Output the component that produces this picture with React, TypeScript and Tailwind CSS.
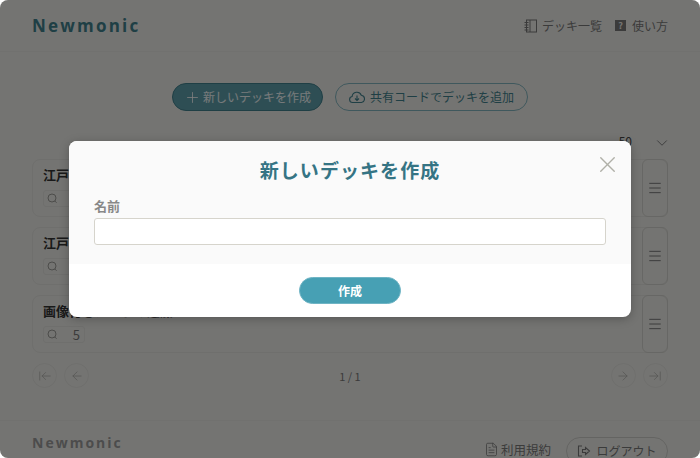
import { ArrowLeft, ArrowLeftToLine, ArrowRight, ArrowRightToLine, ChevronDown, FileText, Menu, Plus, X } from 'lucide-react';

const font = { jp: "font-['Noto_Sans_CJK_JP','Noto_Sans',sans-serif]" };

interface DeckRowProps {
  title: string;
  count: string;
}

const QuestionIcon = () => (
  <svg width="11" height="11" viewBox="0 0 11 11" fill="none" stroke="#999995" strokeWidth="1" className="shrink-0">
    <circle cx="5" cy="5" r="4" />
    <path d="M7.600 7.800l2 2" />
  </svg>
);

const NotebookIcon = () => (
  <svg width="13" height="14" viewBox="0 0 13 14" fill="none" stroke="currentColor" strokeWidth="1">
    <rect x="2.5" y="1" width="10" height="12" />
    <path d="M6 1v12M0.5 3.5h4M0.5 6h4M0.5 8.500h4M0.5 11h4" />
  </svg>
);

const CloudIcon = () => (
  <svg width="16" height="14" viewBox="0 0 16 14" fill="none" stroke="currentColor" strokeWidth="1.1">
    <path d="M4 12.500H3.500a3 3 0 0 1-.4-5.950A4.800 4.800 0 0 1 12.300 5.200a3.700 3.700 0 0 1 .2 7.300H4z" />
    <path d="M8 5.500v5M6 8.500l2 2 2-2" />
  </svg>
);

const LogoutIcon = () => (
  <svg width="14" height="14" viewBox="0 0 14 14" fill="none" stroke="currentColor" strokeWidth="1.1">
    <path d="M5 2H1.500v10H5" />
    <path d="M5.500 5.500h3V3.500l4 3.500-4 3.500v-2h-3z" />
  </svg>
);

const DeckRow = ({ title, count }: DeckRowProps) => (
  <div className="flex h-[58px] rounded-[8px] border border-[#dededa]">
    <div className="flex-1 pl-[10px] pt-[5px]">
      <div className="text-[13px] leading-[20px] font-bold text-[#333]">{title}</div>
      <div className="mt-[5px] flex h-[17px] w-[42px] items-center justify-between rounded-[3px] border border-[#dededa] pl-[3px] pr-[4px]">
        <QuestionIcon />
        <span className="text-[13px] leading-none text-[#777]">{count}</span>
      </div>
    </div>
    <div className="-my-px -mr-px flex w-[26px] items-center justify-center rounded-[6px] border border-[#cfcfca]">
      <Menu size={16} className="text-[#777]" strokeWidth={1.5} />
    </div>
  </div>
);

const PageButton = ({ children }: { children: React.ReactNode }) => (
  <div className="flex h-[25px] w-[25px] items-center justify-center rounded-full border border-[#dededa] text-[#aaaaa6]">
    {children}
  </div>
);

export default function App() {
  return (
    <div className={`relative h-[458px] w-[700px] overflow-hidden bg-white ${font.jp}`}>
      <div className="flex h-full flex-col rounded-[8px] bg-[#e9e9e5]">
        <header className="flex h-[52px] shrink-0 items-center justify-between border-b border-[#e2e2de] px-[32px]">
          <div className="font-['Open_Sans',sans-serif] text-[17px] font-bold tracking-[2.2px] text-[#3f7e8a]">Newmonic</div>
          <div className="flex items-center gap-[13px] text-[12px] text-[#777]">
            <span className="flex items-center gap-[5px]"><NotebookIcon />デッキ一覧</span>
            <span className="flex items-center gap-[6px]">
              <span className="flex h-[11px] w-[11px] items-center justify-center bg-[#777] text-[9px] leading-none font-bold text-[#e9e9e5]">?</span>
              使い方
            </span>
          </div>
        </header>

        <main className="flex-1 px-[32px]">
          <div className="mt-[31px] flex justify-center gap-[12px] text-[12px]">
            <div className="flex h-[28px] w-[151px] items-center justify-center gap-[2px] rounded-full border border-[#3f7e8a] bg-[#5d9ca8] text-white/90">
              <Plus size={17} strokeWidth={1.25} />新しいデッキを作成
            </div>
            <div className="flex h-[28px] w-[193px] items-center justify-center gap-[5px] rounded-full border border-[#7fb0ba] text-[#3f7e8a]">
              <CloudIcon />共有コードでデッキを追加
            </div>
          </div>

          <div className="mt-[21px] flex h-[17px] items-center justify-end text-[12px] text-[#444]">
            <span className="mr-[21px]">50</span>
            <ChevronDown size={18} className="-mr-[3px] mt-[5px] text-[#777]" strokeWidth={1.25} />
          </div>

          <div className="mt-[10px] flex flex-col gap-[10px]">
            <DeckRow title="江戸時代の文化" count="2" />
            <DeckRow title="江戸時代の歴史" count="2" />
            <DeckRow title="画像付きカードの追加" count="5" />
          </div>

          <div className="mt-[10px] flex items-center justify-between">
            <div className="flex gap-[7px]">
              <PageButton><ArrowLeftToLine size={14} strokeWidth={1.25} /></PageButton>
              <PageButton><ArrowLeft size={14} strokeWidth={1.25} /></PageButton>
            </div>
            <span className="mt-[2px] text-[11px] text-[#777]">1 / 1</span>
            <div className="flex gap-[7px]">
              <PageButton><ArrowRight size={14} strokeWidth={1.25} /></PageButton>
              <PageButton><ArrowRightToLine size={14} strokeWidth={1.25} /></PageButton>
            </div>
          </div>
        </main>

        <footer className="flex h-[38px] shrink-0 justify-between border-t border-[#e2e2de] px-[32px] pt-[12px]">
          <div className="font-['Open_Sans',sans-serif] text-[14px] leading-[19px] font-bold tracking-[2px] text-[#999]">Newmonic</div>
          <div className="flex items-start gap-[15px] text-[12px] text-[#777]">
            <span className="mt-[9px] flex items-center gap-[2px] text-[12.5px] leading-[15px]"><FileText size={15} strokeWidth={1.25} />利用規約</span>
            <span className="mt-[4px] flex h-[28px] w-[102px] items-center justify-center gap-[5px] rounded-full border border-[#c9c9c5] leading-[14px]">
              <LogoutIcon />ログアウト
            </span>
          </div>
        </footer>
      </div>

      {/* モーダル */}
      <div className="absolute inset-0 flex items-center justify-center rounded-[8px] bg-black/50">
        <div className="relative w-[562px] overflow-hidden rounded-[8px] bg-white shadow-[0_2px_10px_rgba(0,0,0,0.25)]">
          <div className="h-[123px] bg-[#fafafa] px-[25px] pt-[15px]">
            <h2 className="text-center text-[19px] leading-[28px] font-bold tracking-[1.07px] text-[#357484]">新しいデッキを作成</h2>
            <div className="mt-[13px] text-[13px] leading-[18px] font-bold text-[#888]">名前</div>
            <input className="mt-[3px] block h-[27px] w-full rounded-[3px] border border-[#d6d4cc] bg-white" />
          </div>
          <div className="flex h-[53px] items-center justify-center">
            <button className="h-[27px] w-[102px] rounded-full border border-[#6fb4c4] bg-[#47a0b4] text-[12px] font-bold text-white">作成</button>
          </div>
          <X size={27} strokeWidth={1.25} className="absolute right-[10px] top-[10px] text-[#b0b0a8]" />
        </div>
      </div>
    </div>
  );
}
